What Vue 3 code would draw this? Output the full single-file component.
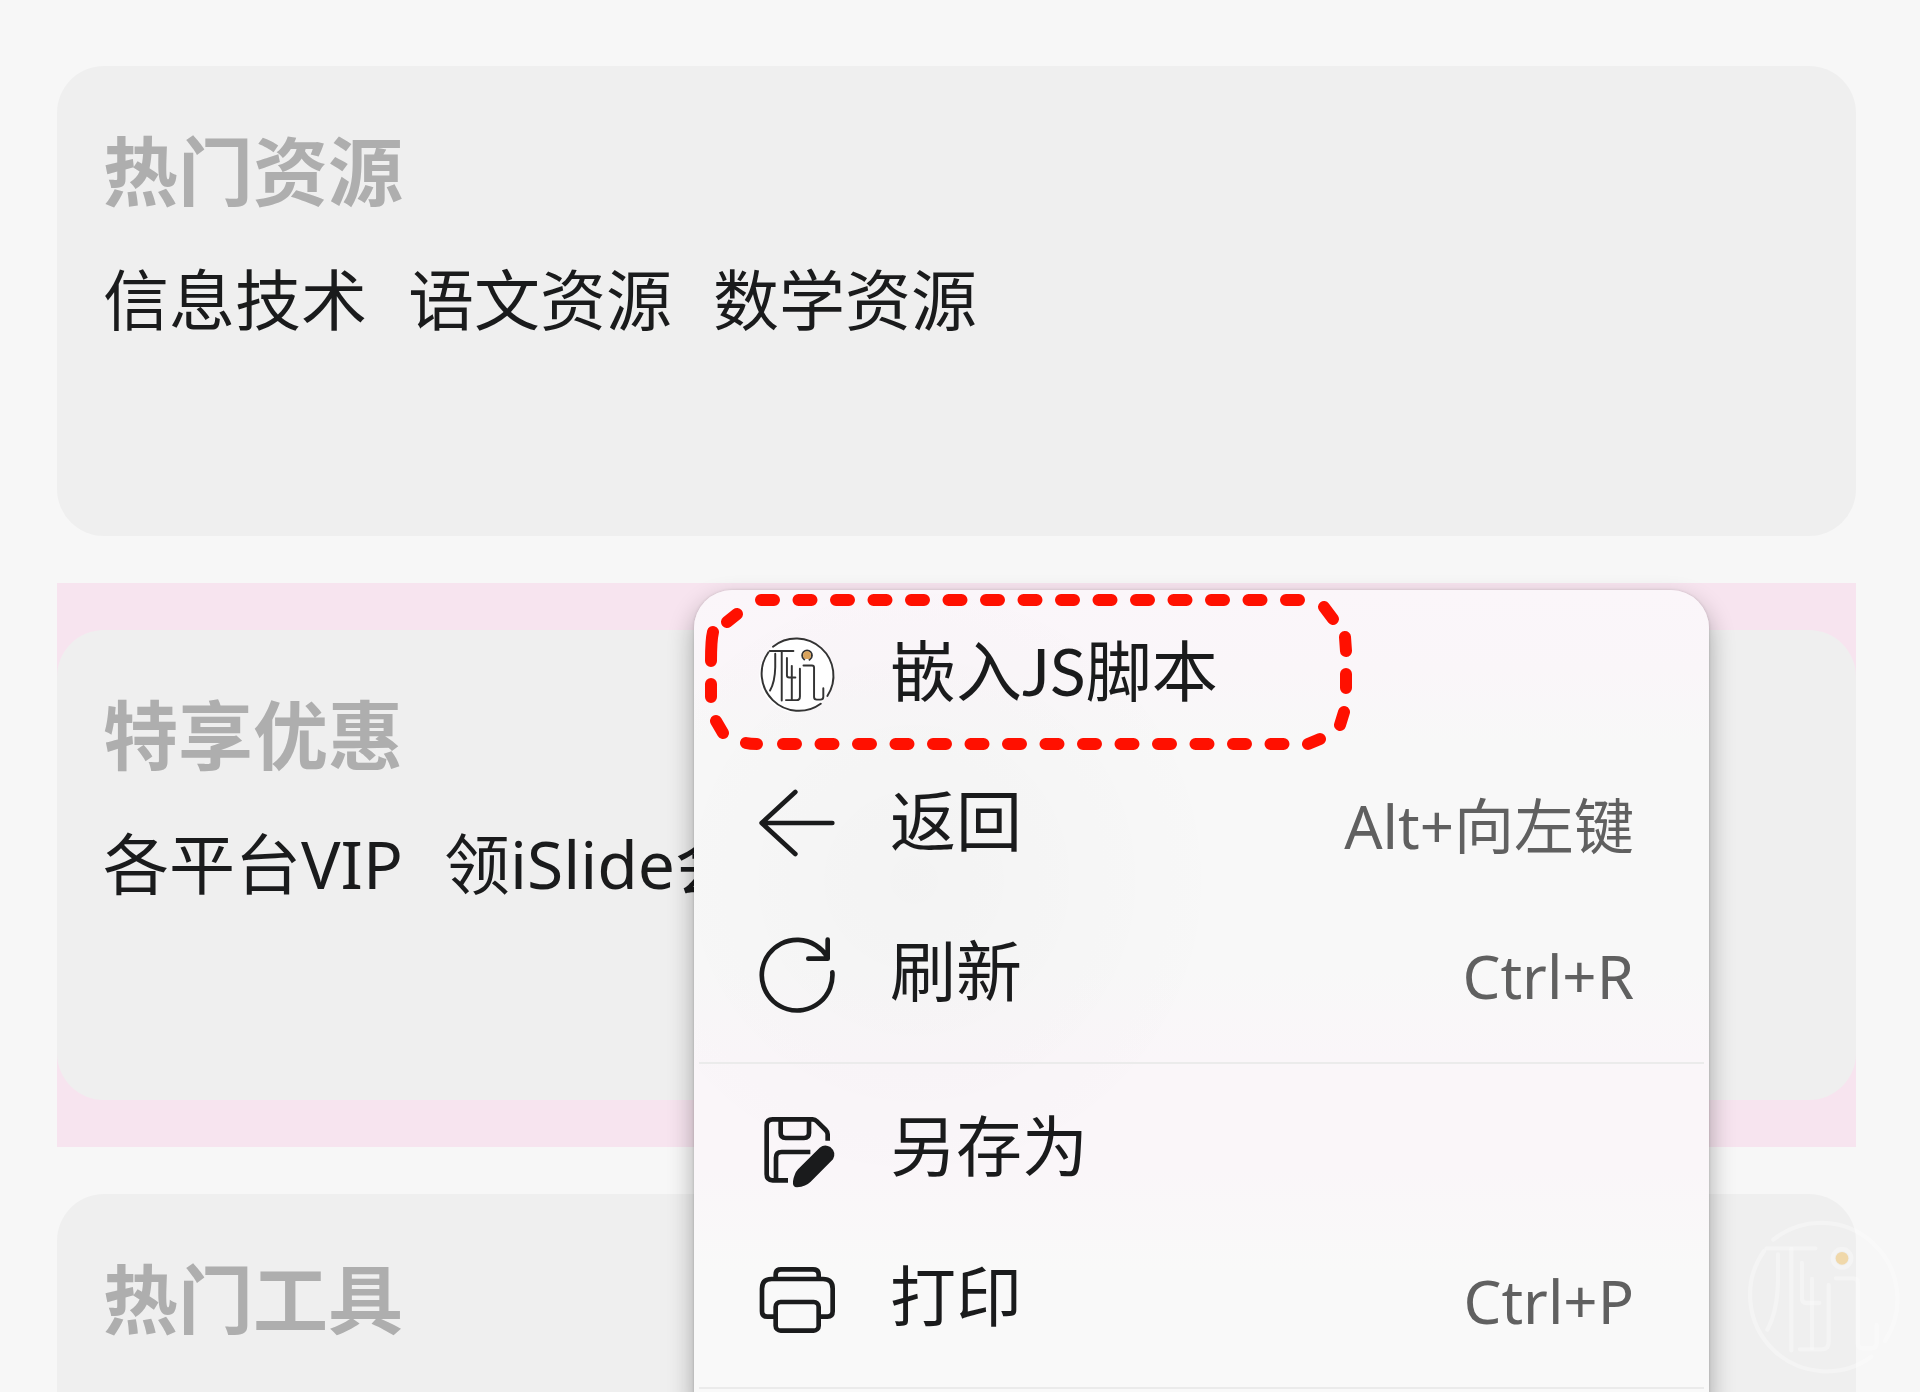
<script setup>
const cards = [
  { title: '热门资源', links: ['信息技术', '语文资源', '数学资源'] },
  { title: '特享优惠', links: ['各平台VIP', '领iSlide会员'], highlighted: true },
  { title: '热门工具', links: [] }
]

const logoStrokes = [
  'M350 174A229 229 0 0 1 685 478',
  'M644 525A229 229 0 0 1 322 208',
  'M330 200H476',
  'M364 218V300Q362 390 332 444',
  'M404 202V506',
  'M436 244V350Q436 364 450 364H488',
  'M466 292V500',
  'M516 310V480Q516 503 495 503H430',
  'M538 290H590Q603 290 603 304V484Q603 500 620 500H642Q660 500 660 484V430'
]

const groups = [
  [
    { label: '嵌入JS脚本', icon: 'logo' },
    { label: '返回', icon: 'back', keys: 'Alt+向左键' },
    { label: '刷新', icon: 'refresh', keys: 'Ctrl+R' }
  ],
  [
    { label: '另存为', icon: 'save' },
    { label: '打印', icon: 'print', keys: 'Ctrl+P' }
  ]
]
</script>

<template>
  <main class="page">
    <div class="cards">
      <div v-for="card in cards" :key="card.title" class="slot" :class="{ highlighted: card.highlighted }">
        <section class="card">
          <h2>{{ card.title }}</h2>
          <nav class="links">
            <a v-for="link in card.links" :key="link" href="#">{{ link }}</a>
          </nav>
        </section>
      </div>
    </div>

    <div class="menu" role="menu">
      <div v-for="(group, index) in groups" :key="index" class="group">
        <button v-for="item in group" :key="item.label" type="button" role="menuitem" class="item">
          <svg v-if="item.icon === 'logo'" class="icon logo" viewBox="264 102 468 468" aria-hidden="true">
            <circle cx="494" cy="350" r="229" class="disc" />
            <path v-for="d in logoStrokes" :key="d" :d="d" />
            <circle cx="560" cy="228" r="30" class="ring" />
            <circle cx="560" cy="226" r="24" class="dot" />
          </svg>
          <svg v-else-if="item.icon === 'back'" class="icon" viewBox="58 46 228 228" aria-hidden="true">
            <path d="M278 160H66M167 67L66 160L167 253" />
          </svg>
          <svg v-else-if="item.icon === 'refresh'" class="icon" viewBox="58 498 228 228" aria-hidden="true">
            <path d="M278 610A106 106 0 1 1 262 562M264 512V569H206" />
          </svg>
          <svg v-else-if="item.icon === 'save'" class="icon" viewBox="58 60 228 228" aria-hidden="true">
            <path class="flat" d="M145 271H99Q81 271 81 253V106Q81 88 99 88H219Q226 88 232 94L258 120Q264 126 264 133V152M123 90V129Q123 144 138 144H193Q208 144 208 129V90M109 268V203Q109 186 126 186H212" />
            <path class="pen" d="M160 274Q164 250 175 238L240 173Q255 161 272 171Q291 187 280 208L213 275Q199 289 172 292Q158 292 160 274Z" />
          </svg>
          <svg v-else class="icon" viewBox="58 510 228 228" aria-hidden="true">
            <path class="flat" d="M108 564V554Q108 538 124 538H220Q237 538 237 554V564M106 680H83Q67 680 67 664V596Q67 567 96 567H250Q279 567 279 596V664Q279 680 263 680H239" />
            <rect x="108" y="636" width="129" height="86" rx="15" />
          </svg>
          <span class="label">{{ item.label }}</span>
          <kbd v-if="item.keys">{{ item.keys }}</kbd>
        </button>
      </div>
      <svg class="marker" viewBox="0 0 650 160" aria-hidden="true">
        <path d="M61 14H600" stroke-dasharray="13 24.5" />
        <path d="M83 158H590" stroke-dasharray="13 24.5" />
        <path d="M27 36L37 28M13 46Q11 54 11 75M11 98V111M16 135L23 147M46 157Q50 158 57 158M624 21L633 33M645 51L646 65M646 88V102M644 126L640 139M608 158L620 153" />
      </svg>
    </div>

    <svg class="watermark" viewBox="256 112 480 480" aria-hidden="true">
      <path v-for="d in logoStrokes" :key="d" :d="d" />
      <circle cx="556" cy="230" r="28" />
      <circle cx="556" cy="230" r="19" class="dot" />
    </svg>
  </main>
</template>

<style>
body {
  margin: 0;
  background: #f7f7f7;
}
</style>

<style scoped>
.page {
  position: relative;
  height: 100vh;
  overflow: hidden;
  box-sizing: border-box;
  padding: 19px 64px 0 57px;
  background: #f7f7f7;
  color: #1a1b1c;
  font-family: "Noto Sans", "Noto Sans CJK SC", sans-serif;
}

.slot {
  padding: 47px 0;
}

.highlighted {
  background: #f7e4ef;
}

.card {
  box-sizing: border-box;
  min-height: 470px;
  padding: 55px 46px;
  border-radius: 47px;
  background: #efefef;
}

h2 {
  margin: 0;
  font-size: 75px;
  line-height: 100px;
  font-weight: 700;
  color: #aeaeae;
}

.links {
  display: flex;
  gap: 41px;
  margin-top: 33px;
  white-space: nowrap;
}

.links a {
  color: inherit;
  font-size: 66px;
  line-height: 90px;
  text-decoration: none;
}

.menu {
  position: absolute;
  top: 590px;
  left: 694px;
  box-sizing: border-box;
  width: 1015px;
  padding: 8px 5px 40px;
  border-radius: 38px;
  background:
    radial-gradient(circle at 220px 290px, rgba(0, 0, 0, 0.02), transparent 320px),
    linear-gradient(#fbf6fa 0, #faf6f9 80px, #f8f8f8 150px, #f8f8f8 380px, #faf6f9 470px, #faf6f9 580px, #f9f9f9 680px);
  box-shadow: 0 0 3px rgba(0, 0, 0, 0.15), 0 12px 26px rgba(0, 0, 0, 0.32);
}

.group {
  padding-bottom: 14px;
  border-bottom: 2px solid #ebebeb;
}

.group + .group {
  padding-top: 9px;
}

.item {
  display: flex;
  align-items: center;
  width: 100%;
  height: 150px;
  padding: 0 70px 0 60px;
  border: 0;
  background: none;
  color: inherit;
  font-family: inherit;
  font-size: 66px;
  line-height: 90px;
  text-align: left;
}

.icon {
  flex: none;
  width: 76px;
  height: 76px;
  margin-right: 55px;
  overflow: visible;
  fill: none;
  stroke: #1a1b1c;
  stroke-width: 14;
  stroke-linecap: round;
  stroke-linejoin: round;
}

.icon .flat {
  stroke-linecap: butt;
}

.icon .pen {
  fill: #1a1b1c;
  stroke: none;
}

.logo {
  stroke: #333;
  stroke-width: 12;
}

.logo .disc {
  fill: #fff;
  stroke: none;
}

.logo .ring {
  stroke-dasharray: 155 34;
  stroke-dashoffset: 125;
}

.logo .dot {
  fill: #d9a35c;
  stroke: none;
}

.label {
  flex: 1;
  padding-bottom: 4px;
  font-family: Lato, "Noto Sans CJK SC", sans-serif;
}

kbd {
  padding-top: 6px;
  color: #606060;
  font-family: inherit;
  font-size: 60px;
  line-height: 80px;
}

.marker {
  position: absolute;
  top: -4px;
  left: 6px;
  width: 650px;
  height: 160px;
  overflow: visible;
  fill: none;
  stroke: #ff1000;
  stroke-width: 12;
  stroke-linecap: round;
  pointer-events: none;
}

.watermark {
  position: absolute;
  right: 18px;
  bottom: 13px;
  width: 160px;
  height: 160px;
  fill: none;
  stroke: rgba(255, 255, 255, 0.3);
  stroke-width: 13;
  stroke-linecap: round;
  pointer-events: none;
}

.watermark .dot {
  fill: #f0d8aa;
  stroke: none;
}
</style>
